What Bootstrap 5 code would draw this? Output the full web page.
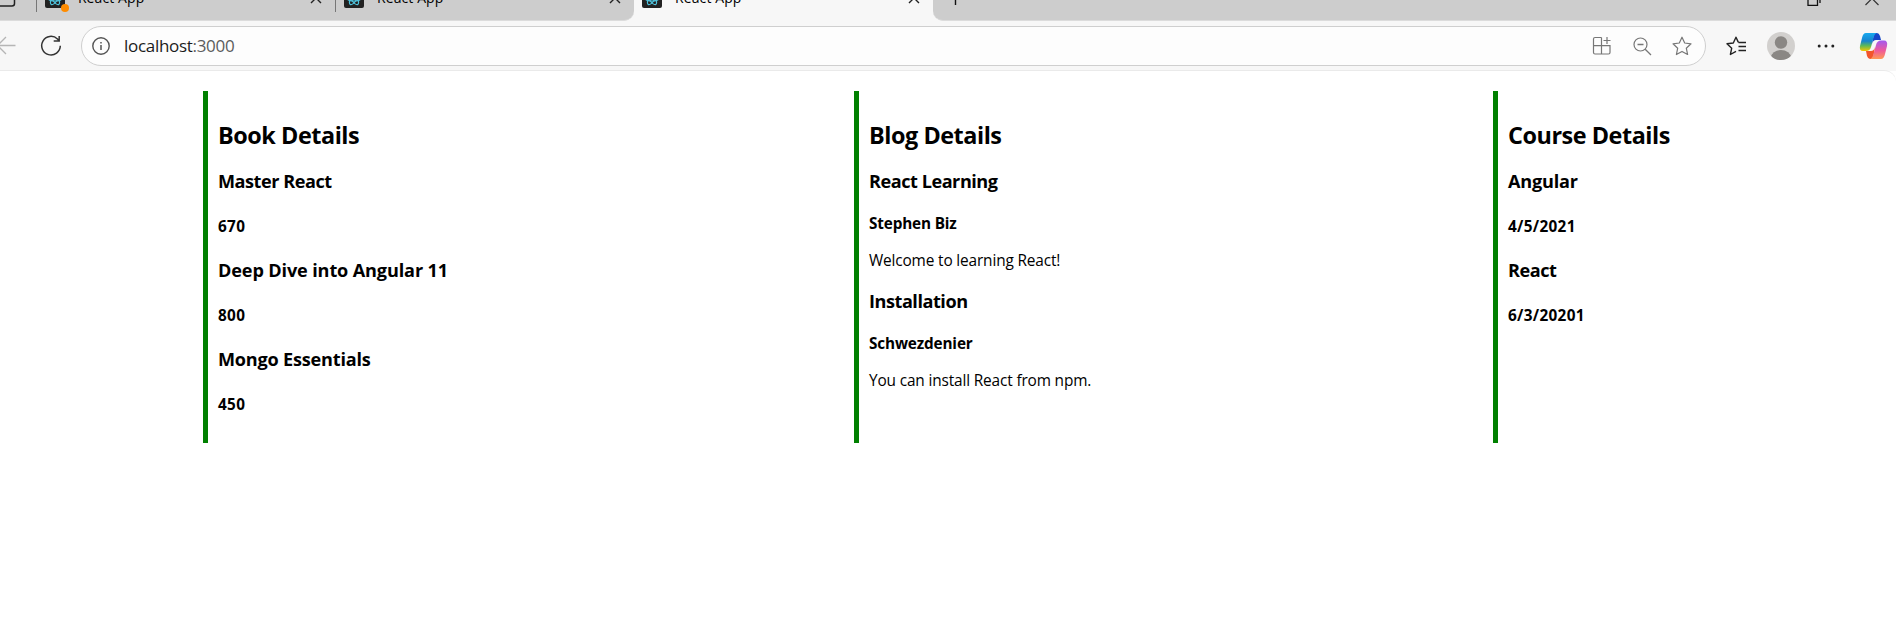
<!DOCTYPE html>
<html lang="en">
<head>
<meta charset="utf-8">
<title>React App</title>
<link rel="stylesheet" href="https://cdn.jsdelivr.net/npm/bootstrap@5.3.0/dist/css/bootstrap.min.css">
<style>
body{font-family:"Open Sans","Noto Sans",sans-serif;color:#000;background:#fff;height:638px;overflow:hidden}
svg{display:block;flex:none;fill:none}
.chrome{background:#f7f7f7;height:71px}
.strip{height:21px;overflow:hidden}
.strip>div{height:45px;padding-bottom:1px}
.shade{background:#cdcdcd;border-bottom:1px solid #dcdcdc}
.shade-left{width:634px;border-bottom-right-radius:10px}
.shade-right{width:963px;border-bottom-left-radius:10px}
.lead-icon{width:36px}
.tab-item{width:299px;height:44px;padding-left:8px;padding-right:13px}
.sep{width:1px;height:28px;background:#777}
.tab-title{font-size:14px;letter-spacing:.1px;line-height:20px;margin-left:13px}
.dot{width:8px;height:8px;border-radius:50%;background:#ff8c00;left:16px;top:16px}
.bar{height:49px;padding-top:5px}
.address{width:1625px;height:40px;border:1px solid #cfcfcf;border-radius:20px;background:#fdfdfd;margin-left:19px;padding:0 13px 0 10px}
.url{font-size:17px;line-height:24px;letter-spacing:-.3px;color:#1b1b1b;margin-left:14px}
.url span{color:#5c5c5c}
.actions{height:39px}
.page{background:#fff;border-top:1px solid #eaeaea;border-top-right-radius:12px;margin-top:-1px;height:568px;padding:20px 0 0 203px}
.panel{height:352px;border-left:5px solid green;padding:28px 0 0 10px}
.panel-book{width:651px}.panel-blog{width:639px}.panel-course{width:403px}
.panel h2,.panel h3,.panel h4,.panel p{margin:0;white-space:nowrap;font-weight:700}
.panel h2{font-size:23.4px;line-height:32px;letter-spacing:-.45px}
.panel h3{font-size:18.1px;line-height:26px;margin-top:20px;letter-spacing:-.2px}
.panel h2+h3{margin-top:17px}
.panel h4{font-size:15.3px;line-height:22px;margin-top:21px;letter-spacing:-.15px}
.panel p{font-size:15.4px;font-weight:400;line-height:22px;margin-top:16px;letter-spacing:-.15px}
.panel-book h4,.panel-course h4{letter-spacing:.33px}
.panel h4+h3{margin-top:20px}
.panel-blog h3{margin-top:16px;letter-spacing:-.46px}
.panel-blog h2+h3{margin-top:17px}
.panel-blog h4{margin-top:18px}
.panel .tight{letter-spacing:-.46px}
.panel .loose{letter-spacing:-.13px}
</style>
</head>
<body>
<svg width="0" height="0" class="position-absolute">
<defs>
<g id="react"><rect width="20" height="20" rx="2" fill="#222"/><g stroke="#4fc3dc" stroke-width="1.2"><ellipse cx="10" cy="10" rx="7.500" ry="3"/><ellipse cx="10" cy="10" rx="7.500" ry="3" transform="rotate(60 10 10)"/><ellipse cx="10" cy="10" rx="7.500" ry="3" transform="rotate(120 10 10)"/></g><circle cx="10" cy="10" r="1.6" fill="#61dafb"/></g>
<path id="cross" d="M1 1 11 11M11 1 1 11" stroke="#222" stroke-width="1.4"/>
<path id="star" d="M10 1.2 12.7 7 19 7.8 14.3 12.2 15.6 18.5 10 15.4 4.4 18.5 5.7 12.2 1 7.8 7.3 7Z" stroke-linejoin="round"/>
</defs>
</svg>
<header class="chrome">
<div class="strip d-flex justify-content-between align-items-end">
<div class="shade shade-left d-flex align-items-center">
<div class="lead-icon"><svg width="20" height="20"><path d="M-2 2H12Q14.500 2 14.500 5V15.500Q14.500 18 12 18H-2M4 2V7H14.500" stroke="#222" stroke-width="1.5"/></svg></div>
<div class="sep"></div>
<div class="tab-item d-flex align-items-center"><div class="position-relative"><svg width="20" height="20"><use href="#react"/></svg><span class="dot position-absolute"></span></div><span class="tab-title">React App</span><svg class="ms-auto" width="12" height="12"><use href="#cross"/></svg></div>
<div class="sep"></div>
<div class="tab-item d-flex align-items-center"><svg width="20" height="20"><use href="#react"/></svg><span class="tab-title">React App</span><svg class="ms-auto" width="12" height="12"><use href="#cross"/></svg></div>
</div>
<div class="tab-item d-flex align-items-center"><svg width="20" height="20"><use href="#react"/></svg><span class="tab-title">React App</span><svg class="ms-auto" width="12" height="12"><use href="#cross"/></svg></div>
<div class="shade shade-right d-flex align-items-center">
<svg class="ms-3" width="14" height="16"><path d="M6.500 1V15M0 8H13" stroke="#111" stroke-width="1.4"/></svg>
<svg class="ms-auto" width="14" height="16"><path d="M1 5.500H10.500V15.500H1ZM4 2.500H13V13" stroke="#111" stroke-width="1.3"/></svg>
<svg style="margin:0 17px 0 44px" width="14" height="16"><path d="M.5 2 13.500 15M13.500 2 .5 15" stroke="#333" stroke-width="1.2"/></svg>
</div>
</div>
<div class="bar d-flex">
<svg width="16" height="40"><path d="M15.500 19.500H-2M6 11-2.500 19.500 6 28" stroke="#b5b5b5" stroke-width="1.3"/></svg>
<svg width="22" height="40" style="margin-left:24px"><path d="M20.300 19.800A9.300 9.300 0 1 1 17.500 13L19.200 14.700M19.200 10V15H13.700" stroke="#333" stroke-width="1.5"/></svg>
<div class="address d-flex align-items-center">
<svg width="18" height="18"><circle cx="9" cy="9" r="8.2" stroke="#555" stroke-width="1.4"/><path d="M9 8V13M9 5V6.500" stroke="#555" stroke-width="1.5"/></svg>
<div class="url">localhost<span>:3000</span></div>
<svg class="ms-auto" width="20" height="20"><path d="M9.500 1.500H3Q1.500 1.500 1.500 3V16.500Q1.500 18 3 18H16.500Q18 18 18 16.500V9.700H1.500M9.500 1.500V18M15 1V8M11.500 4.500H18.500" stroke="#777" stroke-width="1.2"/></svg>
<svg style="margin-left:21px" width="19" height="19"><circle cx="7.500" cy="7.500" r="6.500" stroke="#777" stroke-width="1.2"/><path d="M4.500 7.500H10.500M12.200 12.200 18 18" stroke="#777" stroke-width="1.3"/></svg>
<svg style="margin-left:20px" width="20" height="20"><use href="#star" stroke="#777" stroke-width="1.2"/></svg>
</div>
<div class="actions d-flex align-items-center">
<svg style="margin-left:20px" width="21" height="20"><path d="M12 5.700 10 1.200 7.300 7 1 7.800 5.700 12.200 4.400 18.500 10 15.400M10 1.200 12.500 6.500M12.500 6.500H20M12.500 10.500H20M12.500 14.500H20" stroke="#222" stroke-width="1.4" stroke-linejoin="round"/></svg>
<svg style="margin-left:20px" width="28" height="28"><defs><clipPath id="face"><circle cx="14" cy="14" r="14"/></clipPath></defs><g clip-path="url(#face)"><rect width="28" height="28" fill="#d2d0ce"/><circle cx="14" cy="10.500" r="6.200" fill="#8a8784"/><ellipse cx="14" cy="25.500" rx="10" ry="7.500" fill="#8a8784"/></g></svg>
<svg style="margin-left:22px" width="18" height="6"><g fill="#222"><circle cx="2.200" cy="3" r="1.500"/><circle cx="9" cy="3" r="1.500"/><circle cx="15.800" cy="3" r="1.500"/></g></svg>
<svg style="margin-left:24px" width="29" height="28" viewBox="0 0 29 28"><defs><linearGradient id="ca" x1="0" y1="0" x2="0" y2="1"><stop offset="0" stop-color="#19a9ee"/><stop offset=".45" stop-color="#1784cf"/><stop offset=".7" stop-color="#5bb85a"/><stop offset="1" stop-color="#f5c800"/></linearGradient><linearGradient id="cb" x1="0" y1="0" x2="0" y2="1"><stop offset="0" stop-color="#a259f0"/><stop offset=".55" stop-color="#ef5a9a"/><stop offset="1" stop-color="#ff9a55"/></linearGradient></defs><path d="M15 1H18Q20 1 21 4L22 8H17Q14 8 13 12Z" fill="#1746c8"/><path d="M14 27H11Q9 27 8 24L7 19H12Q15 19 16 15Z" fill="#f2552c"/><path d="M7 1H18Q15.500 1.500 14.500 6L12 15Q11 19 7 19H4Q0 19 1 14L3 6Q4 1 7 1Z" fill="url(#ca)"/><path d="M22 27H11Q13.500 26 14.500 22L17 13Q18 8.500 22 8.500H25Q29 8.500 28 14L26 22Q25 27 22 27Z" fill="url(#cb)"/></svg>
</div>
</div>
</header>
<main class="page d-flex align-items-start">
<section class="panel panel-book"><h2>Book Details</h2><h3 class="tight">Master React</h3><h4>670</h4><h3 class="loose">Deep Dive into Angular 11</h3><h4>800</h4><h3>Mongo Essentials</h3><h4>450</h4></section>
<section class="panel panel-blog"><h2>Blog Details</h2><h3>React Learning</h3><h4>Stephen Biz</h4><p>Welcome to learning React!</p><h3>Installation</h3><h4>Schwezdenier</h4><p>You can install React from npm.</p></section>
<section class="panel panel-course"><h2>Course Details</h2><h3>Angular</h3><h4>4/5/2021</h4><h3 class="tight">React</h3><h4>6/3/20201</h4></section>
</main>
<script src="https://cdn.jsdelivr.net/npm/bootstrap@5.3.0/dist/js/bootstrap.bundle.min.js"></script>
</body>
</html>
